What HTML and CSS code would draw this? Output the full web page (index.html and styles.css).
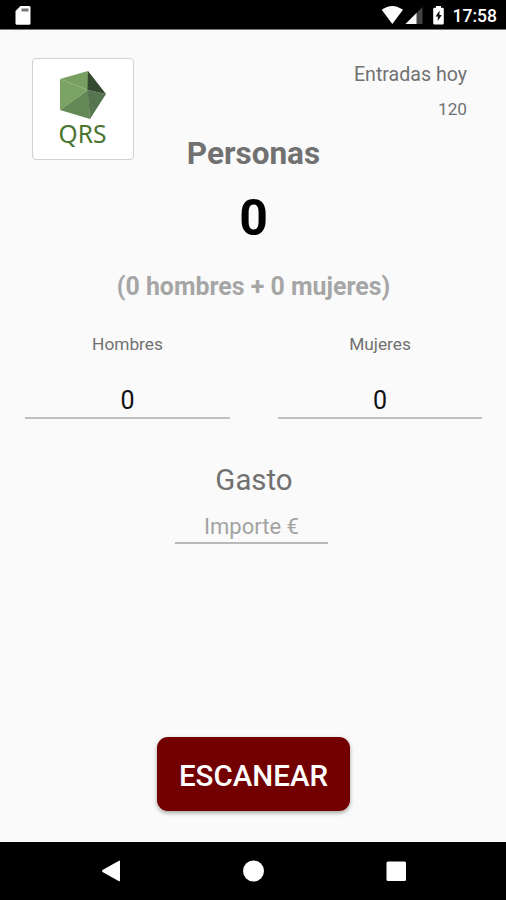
FILE: index.html
```
<!DOCTYPE html>
<html lang="es">
<head>
<meta charset="utf-8">
<title>QRS</title>
<link rel="stylesheet" href="styles.css">
</head>
<body>
<div class="status">
  <svg class="status-icons" width="506" height="30" viewBox="0 0 506 30">
    <path fill="#fff" d="M20.500 6H29q1.500 0 1.500 1.500V23.200q0 1.500-1.500 1.500H17q-1.500 0-1.500-1.500V11z"/>
    <path fill="#777" d="M21.500 8.500h7v3h-7z"/>
    <path fill="#fff" d="M381.700 9.800Q392.300 2.200 403 9.800L392.300 24z"/>
    <path fill="#444" d="M422.500 7v17H405.500z"/>
    <path fill="#fff" d="M416.500 13v11H405.500z"/>
    <path fill="#fff" d="M436 6h5v1.700h1.500q1.300 0 1.300 1.300v14q0 1.500-1.300 1.500h-8q-1.300 0-1.300-1.500V9q0-1.300 1.300-1.300H436z"/>
    <path fill="#111" d="M439.500 10.500l-4 6h2.300v4.500l4-6h-2.300z"/>
  </svg>
  <span class="clock">17:58</span>
</div>
<main>
  <header>
    <div class="logo">
      <svg width="46" height="50" viewBox="0 0 46 50">
        <path fill="#7a9f62" d="M0 9L28 1V20z"/>
        <path fill="#7ba364" d="M0 9L28 20L0 40z"/>
        <path fill="#658955" d="M0 40L28 20L30 49z"/>
        <path fill="#567551" d="M27.500 20L46 24L30 49z"/>
        <path fill="#34492f" d="M28 1L46 24L27.500 20z"/>
      </svg>
      <span>QRS</span>
    </div>
    <div class="stats">
      <div class="stats-label">Entradas hoy</div>
      <div class="stats-value">120</div>
    </div>
  </header>
  <h1>Personas</h1>
  <div class="total">0</div>
  <div class="detail">(0 hombres + 0 mujeres)</div>
  <div class="counts">
    <label><span class="name">Hombres</span><span class="field">0</span></label>
    <label><span class="name">Mujeres</span><span class="field">0</span></label>
  </div>
  <h2>Gasto</h2>
  <div class="amount">Importe €</div>
  <button>ESCANEAR</button>
</main>
<nav>
  <svg width="506" height="58" viewBox="0 0 506 58">
    <path fill="#fff" d="M102.500 28L119 18.700q1-.5 1 .6V38.700q0 1-1 .5L102.500 30q-1-1 0-2z"/>
    <circle cx="253.500" cy="29" r="10.500" fill="#fff"/>
    <rect x="386.500" y="19.500" width="19.500" height="19.500" rx="1.500" fill="#fff"/>
  </svg>
</nav>
</body>
</html>
```
FILE: styles.css
```
* { box-sizing: border-box; }
body {
  margin: 0;
  width: 506px;
  height: 900px;
  display: flex;
  flex-direction: column;
  background: #fafafa;
  color: #717171;
  font-family: Roboto, "Liberation Sans", sans-serif;
  overflow: hidden;
}
.status {
  position: relative;
  height: 30px;
  background: #000;
  border-bottom: 1px solid #777;
  display: flex;
  justify-content: flex-end;
  padding-right: 9px;
}
.status-icons { position: absolute; left: 0; top: 0; }
.clock {
  color: #fff;
  font-size: 17.500px;
  font-weight: 500;
  line-height: 32px;
}
main {
  flex: 1;
  display: flex;
  flex-direction: column;
  align-items: center;
}
header {
  align-self: stretch;
  height: 130px;
  padding: 28px 39px 0 32px;
  display: flex;
  justify-content: space-between;
}
.logo {
  width: 102px;
  height: 102px;
  background: #fff;
  border: 1px solid #d3d1cd;
  border-radius: 4px;
  display: flex;
  flex-direction: column;
  align-items: center;
  padding-top: 11px;
}
.logo span {
  font-family: "Noto Sans", sans-serif;
  font-size: 24.500px;
  line-height: 28px;
  margin-right: 1px;
  color: #4a7530;
}
.stats { text-align: right; }
.stats-label { font-size: 19.600px; line-height: 34px; }
.stats-value { font-size: 17.200px; line-height: 34px; }
h1 {
  margin: -27px 0 0 1px;
  font-size: 31.500px;
  line-height: 42px;
  font-weight: 700;
}
.total {
  color: #000;
  font-size: 50px;
  font-weight: 700;
  line-height: 70px;
  margin: 8px 0 0 1px;
}
.detail {
  color: #a6a6a6;
  font-size: 24.900px;
  font-weight: 700;
  line-height: 40px;
  margin-top: 14px;
  margin-left: 1px;
}
.counts {
  align-self: stretch;
  display: grid;
  grid-template-columns: 205px 204px;
  column-gap: 48px;
  padding-left: 25px;
  margin-top: 22px;
}
.counts label {
  display: flex;
  flex-direction: column;
  text-align: center;
}
.name { font-size: 17.300px; line-height: 30px; }
.field {
  color: #111;
  font-size: 25px;
  line-height: 36px;
  height: 60px;
  padding-top: 24px;
  border-bottom: 2px solid #c1c1c1;
}
h2 {
  margin: 41px 0 0 2px;
  font-size: 29.400px;
  font-weight: 400;
  line-height: 40px;
}
.amount {
  width: 153px;
  height: 44px;
  margin-right: 3px;
  padding-top: 12px;
  text-align: center;
  color: #a3a3a3;
  font-size: 22px;
  line-height: 30px;
  border-bottom: 2px solid #b9b9b9;
}
button {
  margin-top: 193px;
  width: 193px;
  height: 74px;
  border: 0;
  border-radius: 11px;
  background: #730000;
  color: #fff;
  font-family: Roboto, "Liberation Sans", sans-serif;
  font-size: 29.500px;
  font-weight: 500;
  line-height: 74px;
  padding: 2px 0 0 1px;
  box-shadow: 0 2px 4px rgba(0, 0, 0, 0.35);
}
nav { height: 58px; background: #000; }
nav svg { display: block; }
```
